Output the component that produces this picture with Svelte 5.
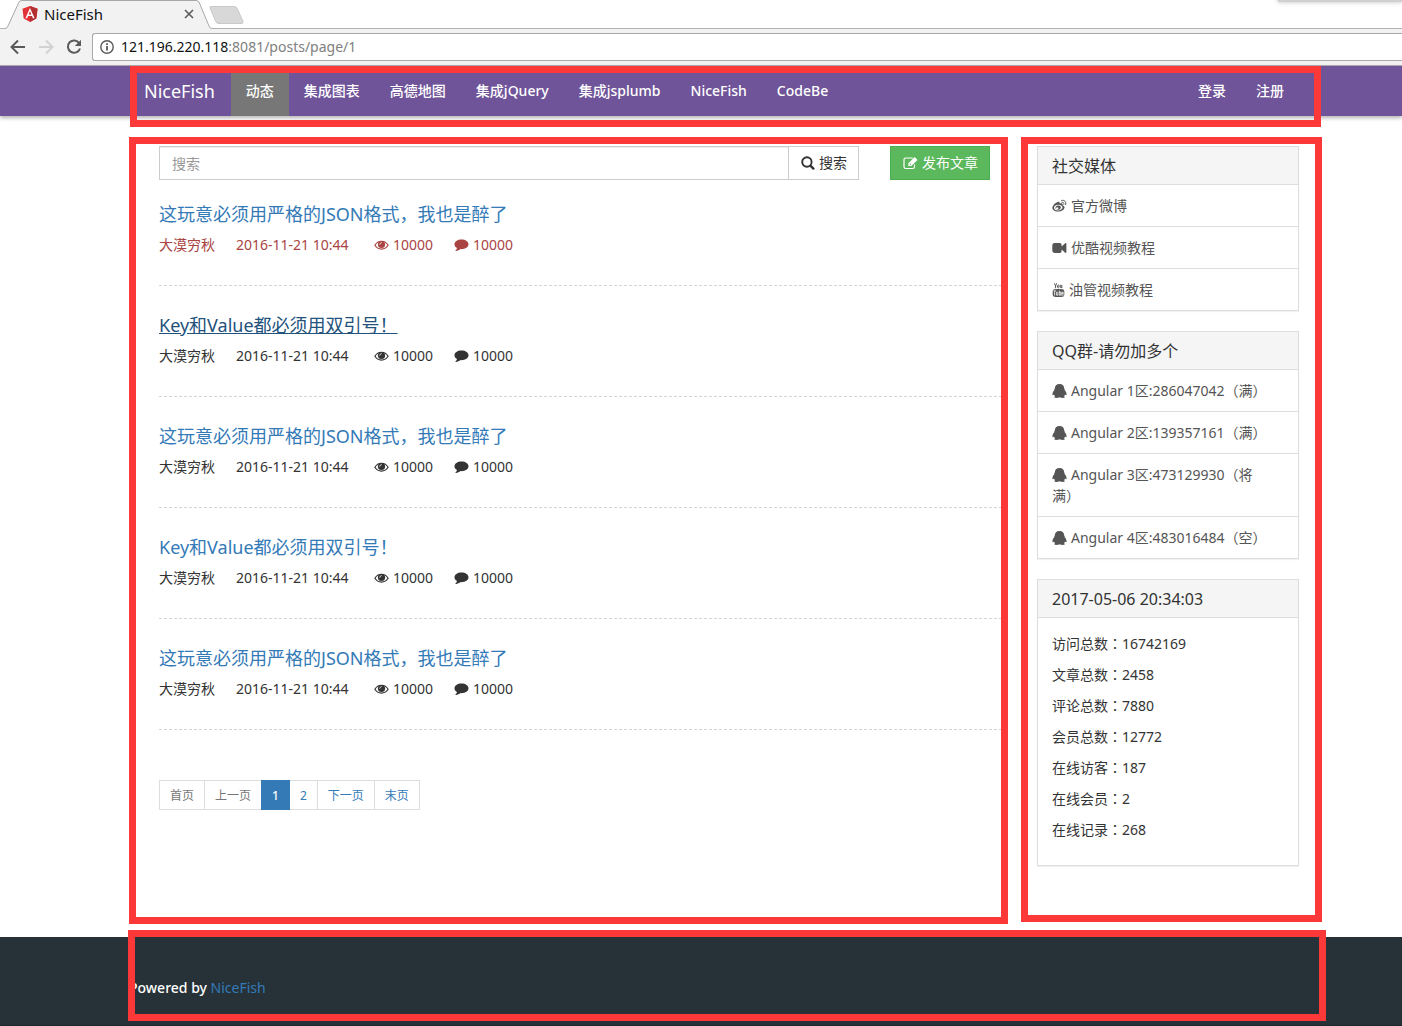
<script>
  const links = ['动态', '集成图表', '高德地图', '集成jQuery', '集成jsplumb', 'NiceFish', 'CodeBe'];
  const account = ['登录', '注册'];

  const json = '这玩意必须用严格的JSON格式，我也是醉了';
  const quotes = 'Key和Value都必须用双引号！';
  const posts = [
    { title: json, hot: true },
    { title: quotes, hovered: true },
    { title: json },
    { title: quotes },
    { title: json }
  ].map((p) => ({ author: '大漠穷秋', time: '2016-11-21 10:44', views: 10000, comments: 10000, ...p }));

  const pages = [
    { label: '首页', disabled: true },
    { label: '上一页', disabled: true },
    { label: '1', active: true },
    { label: '2' },
    { label: '下一页' },
    { label: '末页' }
  ];

  const panels = [
    {
      title: '社交媒体',
      items: [
        { icon: 'weibo', text: '官方微博' },
        { icon: 'video', text: '优酷视频教程' },
        { icon: 'youtube', text: '油管视频教程' }
      ]
    },
    {
      title: 'QQ群-请勿加多个',
      items: [
        { icon: 'qq', text: 'Angular 1区:286047042（满）' },
        { icon: 'qq', text: 'Angular 2区:139357161（满）' },
        { icon: 'qq', text: 'Angular 3区:473129930（将满）' },
        { icon: 'qq', text: 'Angular 4区:483016484（空）' }
      ]
    }
  ];

  const stats = [
    ['访问总数', 16742169],
    ['文章总数', 2458],
    ['评论总数', 7880],
    ['会员总数', 12772],
    ['在线访客', 187],
    ['在线会员', 2],
    ['在线记录', 268]
  ];
</script>

{#snippet icon(name)}
  {#if name === 'weibo'}
    <svg class="icon" width="15" height="14" viewBox="0 0 15 14" aria-hidden="true">
      <path fill="currentColor" fill-rule="evenodd" d="M5.6 3C7 2.500 8 3 7.600 4.600C9.600 3.900 11.100 4.300 10.600 6.200C13.600 7.100 12.800 9.800 10.700 11.200C7.500 13.300 1.200 12.900.400 9.400C0 7.200 3 3.900 5.600 3ZM6 5.700C3.600 5.900 1.900 7.300 2 9C2.200 10.800 4.200 11.700 6.500 11.500C9 11.200 10.700 9.800 10.500 8.100C10.300 6.500 8.400 5.500 6 5.700Z"/>
      <path fill="currentColor" fill-rule="evenodd" d="M6 6.600C8.200 6.300 9.300 7.700 8.600 9.200C8 10.600 6 11.200 4.600 10.600C3.300 10 3.200 8.500 4 7.500C4.500 7 5.200 6.700 6 6.600ZM5.100 8.500A.9.900 0 1 0 5.200 10.200A.9.900 0 1 0 5.100 8.500Z"/>
      <path fill="none" stroke="currentColor" stroke-width="1" stroke-linecap="round" d="M9.600 1.400C12.600.700 14.600 3 13.700 5.600M9.900 3.200C11.300 2.900 12.300 4 11.900 5.200"/>
    </svg>
  {:else if name === 'video'}
    <svg class="icon" width="15" height="14" viewBox="0 0 15 14" aria-hidden="true">
      <path fill="currentColor" d="M2.500 2H7.500A2 2 0 0 1 9.600 4.100V5.500L13.200 2.200C13.600 1.900 14.400 2 14.400 2.700V11.300C14.400 12 13.600 12.100 13.200 11.800L9.600 8.500V9.900A2 2 0 0 1 7.500 12H2.500A2.300 2.300 0 0 1 .300 9.800V4.200A2.300 2.300 0 0 1 2.500 2Z"/>
    </svg>
  {:else if name === 'youtube'}
    <svg class="icon" width="13" height="14" viewBox="0 0 13 14" aria-hidden="true">
      <path fill="none" stroke="currentColor" stroke-width="1" d="M2.400.300L3.600 2.800L4.700.300M3.600 2.600V5.200M5.500 2.600Q6.300 1.200 7 2.600V4.200Q6.300 5.500 5.500 4.200ZM8.300 1.800V4.300Q8.700 5.100 9.800 4.300M9.800 1.800V5.200"/>
      <path fill="currentColor" fill-rule="evenodd" d="M2.300 6.200Q6.500 5.800 10.700 6.200Q12 6.400 12.200 7.700Q12.500 10 12.200 12.300Q12 13.600 10.700 13.700Q6.500 14.100 2.300 13.700Q1 13.600.800 12.300Q.500 10 .800 7.700Q1 6.400 2.300 6.200ZM1.500 7.500V8.300H2.300V12.500H3.100V8.300H3.900V7.500ZM4.300 8.800V12.500H6.200V8.800H5.500V11.800H5V8.800ZM6.900 7.500V12.500H8.800V8.800H7.600V7.500ZM7.600 9.500H8.100V11.800H7.600ZM9.400 8.800V12.500H11.500V11.200H10.800V11.800H10.100V10.900H11.500V8.800ZM10.100 9.500H10.800V10.200H10.100Z"/>
    </svg>
  {:else if name === 'qq'}
    <svg class="icon" width="15" height="14" viewBox="0 0 15 14" aria-hidden="true">
      <path fill="currentColor" d="M7.500.100C10.600.100 12.200 2.200 12.200 4.600C12.600 5 12.800 5.700 12.700 6.300C13.900 7.500 14.900 9.500 14.500 10.900C14.200 11.700 13.500 11 13 10.400C12.800 11.100 12.500 11.700 12 12.200C12.700 12.500 13 13 12.700 13.500C12 14.100 9 14 7.700 13.300C6.500 14 3.100 14.100 2.400 13.500C2.100 13 2.400 12.500 3.100 12.200C2.600 11.700 2.200 11.100 2 10.400C1.500 11 .800 11.700.500 10.900C.100 9.500 1.200 7.500 2.300 6.300C2.200 5.700 2.400 5 2.800 4.600C2.800 2.200 4.400.100 7.500.100Z"/>
    </svg>
  {:else if name === 'eye'}
    <svg class="icon" width="15" height="12" viewBox="0 0 15 12" aria-hidden="true">
      <path fill="none" stroke="currentColor" stroke-width="1.200" d="M.900 6.200C4 .900 11 .900 14.100 6.200C11 11.300 4 11.300.900 6.200Z"/>
      <circle cx="7.500" cy="5.500" r="3.600" fill="currentColor"/>
      <path fill="none" stroke="#fff" stroke-width=".8" stroke-linecap="round" d="M5.700 5.300Q5.800 3.800 7.300 3.600"/>
    </svg>
  {:else if name === 'comment'}
    <svg class="icon" width="15" height="12" viewBox="0 0 15 12" aria-hidden="true">
      <path fill="currentColor" d="M7.500.500C11.500.500 14.500 2.600 14.500 5.300C14.500 8.400 11 10.400 6.600 10.100C5.200 11.200 3.300 12 1.700 11.900C1.300 11.800 1.300 11.500 1.600 11.300C2.400 10.700 2.900 10 3 9.100C1.400 8.200.500 6.900.500 5.300C.500 2.600 3.500.500 7.500.500Z"/>
    </svg>
  {:else if name === 'search'}
    <svg class="icon" width="14" height="14" viewBox="0 0 14 14" aria-hidden="true">
      <circle cx="5.900" cy="6" r="4.700" fill="none" stroke="currentColor" stroke-width="1.900"/>
      <path stroke="currentColor" stroke-width="2.400" stroke-linecap="round" d="M9.600 9.800L12.400 12.600"/>
    </svg>
  {:else if name === 'edit'}
    <svg class="icon" width="15" height="14" viewBox="0 0 15 14" aria-hidden="true">
      <path fill="none" stroke="currentColor" stroke-width="1.200" d="M9.800 2H2.800Q1 2 1 3.800V10.700Q1 12.500 2.800 12.500H9.700Q11.500 12.500 11.500 10.700V8.600"/>
      <path fill="currentColor" fill-rule="evenodd" d="M11.700 1.100L14.500 3.900L8.300 10.100H5.300V7.300ZM6.400 8L7.500 9.100L8.200 8.400L7.100 7.300Z"/>
    </svg>
  {/if}
{/snippet}

<div class="page">
  <header class="browser">
    <div class="tabs">
      <div class="tab">
        <svg class="tab-shape" viewBox="0 0 207 29" aria-hidden="true">
          <path d="M0 28.500Q2 28.500 3 26L14 2Q15 .500 17 .500H191Q193 .500 194 2L204 26Q205 28.500 207 28.500V29H0Z" fill="#f2f2f2"/>
          <path d="M0 28.500Q2 28.500 3 26L14 2Q15 .500 17 .500H191Q193 .500 194 2L204 26Q205 28.500 207 28.500" fill="none" stroke="#a8a8a8"/>
        </svg>
        <svg class="favicon" width="16" height="16" viewBox="0 0 16 16" aria-hidden="true">
          <path d="M8 0L15.500 2.700L14.300 12.500L8 16L1.700 12.500L.500 2.700Z" fill="#e23237"/>
          <path d="M8 0L15.500 2.700L14.300 12.500L8 16Z" fill="#b52e31"/>
          <path d="M8 2L12.600 12.300H10.900L10 10H6L5.100 12.300H3.400ZM8 5.200L6.600 8.600H9.400Z" fill="#fff" fill-rule="evenodd"/>
        </svg>
        <span class="tab-title">NiceFish</span>
        <button class="plain" aria-label="Close tab">
          <svg width="10" height="10" viewBox="0 0 10 10"><path d="M1 1L9 9M9 1L1 9" stroke="#5a5a5a" stroke-width="1.600"/></svg>
        </button>
      </div>
      <button class="plain new-tab" aria-label="New tab">
        <svg width="36" height="18" viewBox="0 0 36 18"><path d="M2 .500H25Q27 .500 28 2L34 15.500Q34.500 17 33 17.500H10Q8 17.500 7 16L1 2Q.500 .500 2 .500Z" fill="#d8d8d8" stroke="#c8c8c8"/></svg>
      </button>
      <span class="window-shade"></span>
    </div>
    <div class="toolbar">
      <button class="plain" aria-label="Back">
        <svg width="16" height="16" viewBox="0 0 16 16"><path d="M15 8H2M8 1.500L1.500 8L8 14.500" fill="none" stroke="#5a5a5a" stroke-width="2"/></svg>
      </button>
      <button class="plain" aria-label="Forward">
        <svg width="16" height="16" viewBox="0 0 16 16"><path d="M1 8H14M8 1.500L14.500 8L8 14.500" fill="none" stroke="#d2d2d2" stroke-width="2"/></svg>
      </button>
      <button class="plain" aria-label="Reload">
        <svg width="16" height="16" viewBox="0 0 16 16"><path d="M13.300 4.200A6.200 6.200 0 1 0 14 9.500" fill="none" stroke="#5a5a5a" stroke-width="2"/><path d="M15 .800V7H8.800Z" fill="#5a5a5a"/></svg>
      </button>
      <div class="address">
        <svg width="14" height="14" viewBox="0 0 14 14" aria-hidden="true"><circle cx="7" cy="7" r="6.200" fill="none" stroke="#5a5a5a" stroke-width="1.400"/><path d="M7 6V10.500M7 3.300V5" stroke="#5a5a5a" stroke-width="1.800"/></svg>
        <span>121.196.220.118<span class="path">:8081/posts/page/1</span></span>
      </div>
    </div>
  </header>

  <nav class="navbar">
    <div class="container">
      <a class="brand" href="#home">NiceFish</a>
      {#each links as link, i}
        <a class="nav-link" class:active={i === 0} href="#{link}">{link}</a>
      {/each}
      <span class="spacer"></span>
      {#each account as link}
        <a class="nav-link" href="#{link}">{link}</a>
      {/each}
      <span class="frame frame-nav"></span>
    </div>
  </nav>

  <div class="content">
    <main>
      <form class="search-row" onsubmit={(e) => e.preventDefault()}>
        <div class="search-group">
          <input type="text" placeholder="搜索" aria-label="搜索" />
          <button class="search-button">{@render icon('search')}搜索</button>
        </div>
        <button class="publish" type="button">{@render icon('edit')}发布文章</button>
      </form>

      {#each posts as post}
        <article class:hot={post.hot}>
          <h2><a class:hovered={post.hovered} href="#post">{post.title}</a></h2>
          <div class="meta">
            <span>{post.author}</span>
            <time>{post.time}</time>
            <span class="count">{@render icon('eye')}{post.views}</span>
            <span class="count">{@render icon('comment')}{post.comments}</span>
          </div>
        </article>
      {/each}

      <ul class="pagination">
        {#each pages as page}
          <li><a class:active={page.active} class:disabled={page.disabled} href="#{page.label}">{page.label}</a></li>
        {/each}
      </ul>
      <span class="frame frame-main"></span>
    </main>

    <aside>
      {#each panels as panel}
        <section class="panel">
          <h3>{panel.title}</h3>
          {#each panel.items as item}
            <a class="item" href="#{item.text}">{@render icon(item.icon)}{item.text}</a>
          {/each}
        </section>
      {/each}
      <section class="panel">
        <h3>2017-05-06 20:34:03</h3>
        <div class="stats">
          {#each stats as [label, value]}
            <p>{label}<span class="colon">：</span>{value}</p>
          {/each}
        </div>
      </section>
      <span class="frame frame-side"></span>
    </aside>
  </div>

  <footer>
    <div class="footer-inner">
      <p>Powered by <a href="#nicefish">NiceFish</a></p>
      <span class="frame frame-footer"></span>
    </div>
  </footer>
</div>

<style>
  :global(body) {
    background: #fff;
  }

  .page {
    display: flex;
    flex-direction: column;
    min-height: 100vh;
    overflow: hidden;
    color: #333;
    font: 14px/20px 'Noto Sans', 'Noto Sans CJK SC', sans-serif;
    text-spacing-trim: space-all;
  }

  .page * {
    box-sizing: border-box;
  }

  a {
    color: #337ab7;
    text-decoration: none;
  }

  h2,
  h3,
  p,
  ul {
    margin: 0;
    padding: 0;
    font-weight: 400;
  }

  button,
  input {
    font: inherit;
  }

  .plain {
    display: flex;
    padding: 0;
    border: 0;
    background: none;
  }

  .icon {
    display: inline-block;
    flex: none;
    margin-right: 4px;
    vertical-align: -2px;
  }

  /* Browser window */
  .tabs {
    position: relative;
    display: flex;
    align-items: center;
    height: 29px;
    border-bottom: 1px solid #b4b4b4;
  }

  .tab {
    position: relative;
    display: flex;
    align-items: center;
    width: 207px;
    height: 29px;
    margin-left: 5px;
    padding: 0 18px 0 17px;
  }

  .tab-shape {
    position: absolute;
    inset: 0;
    width: 100%;
    height: 100%;
  }

  .favicon,
  .tab-title,
  .tab .plain {
    position: relative;
  }

  .tab-title {
    flex: 1;
    padding-left: 6px;
    color: #111;
    font-size: 15px;
  }

  .new-tab {
    margin: 2px 0 0 -3px;
  }

  .window-shade {
    position: absolute;
    top: -6px;
    right: 0;
    width: 124px;
    height: 8px;
    background: #d0d0d0;
    box-shadow: 0 0 5px rgba(0, 0, 0, 0.25);
  }

  .toolbar {
    display: flex;
    align-items: center;
    gap: 12px;
    height: 37px;
    padding-left: 10px;
    border-bottom: 1px solid #b0aeb2;
    background: #f2f2f2;
  }

  .address {
    display: flex;
    flex: 1;
    align-items: center;
    gap: 7px;
    height: 28px;
    margin-left: -2px;
    padding-left: 7px;
    border: 1px solid #a8a8a8;
    border-right: 0;
    border-radius: 3px 0 0 3px;
    background: #fff;
    color: #111;
  }

  .path {
    color: #808080;
  }

  /* Site navigation */
  .navbar {
    padding: 0 103px 0 129px;
    background: #6f5499;
    box-shadow: 0 2px 4px rgba(0, 0, 0, 0.3);
  }

  .container {
    position: relative;
    display: flex;
    height: 50px;
  }

  .brand,
  .nav-link {
    padding: 15px;
    color: #fff;
    white-space: nowrap;
  }

  .brand {
    padding-right: 16px;
    font-size: 18px;
  }

  .nav-link {
    font-weight: 500;
  }

  .nav-link.active {
    background: #777;
  }

  .spacer {
    flex: 1;
  }

  /* Annotation frames drawn over each region */
  .frame {
    position: absolute;
    z-index: 2;
    border: 7px solid #fc3838;
    pointer-events: none;
  }

  .frame-nav {
    inset: 0 -22px -11px 1px;
  }

  .frame-main {
    inset: -9px -1px 13px -30px;
  }

  .frame-side {
    inset: -9px -23px 15px -16px;
  }

  .frame-footer {
    inset: -7px -27px 4px -1px;
  }

  /* Posts */
  .content {
    display: grid;
    grid-template-columns: minmax(0, 1fr) 262px;
    gap: 30px;
    padding: 30px 103px 0 159px;
  }

  main,
  aside {
    position: relative;
  }

  .search-row {
    display: flex;
    gap: 31px;
    padding-right: 17px;
  }

  .search-group {
    display: flex;
    flex: 1;
  }

  .search-group input {
    flex: 1;
    min-width: 0;
    height: 34px;
    padding: 6px 12px;
    border: 1px solid #ccc;
    border-radius: 0;
    box-shadow: inset 0 1px 1px rgba(0, 0, 0, 0.075);
  }

  .search-group input::placeholder {
    color: #999;
  }

  .search-button,
  .publish {
    display: flex;
    align-items: center;
    height: 34px;
    padding: 0 11px 0 12px;
    border: 1px solid #ccc;
    background: #fff;
    color: #333;
    white-space: nowrap;
  }

  .search-button {
    margin-left: -1px;
  }

  .publish {
    border-color: #4cae4c;
    background: #5cb85c;
    color: #fff;
  }

  article {
    padding: 29px 0 30px;
    border-bottom: 1px dashed #d5d5d5;
  }

  .search-row + article {
    padding-top: 24px;
  }

  h2 {
    margin-bottom: 11px;
    font-size: 18px;
    line-height: 20px;
  }

  .hovered {
    color: #23527c;
    text-decoration: underline;
  }

  .meta {
    display: flex;
    gap: 21px;
  }

  .meta time {
    min-width: 117px;
  }

  .hot .meta {
    color: #a94442;
  }

  .count {
    display: flex;
    align-items: center;
  }

  .pagination {
    display: flex;
    margin: 50px 0 127px;
    list-style: none;
  }

  .pagination a {
    display: block;
    margin-right: -1px;
    padding: 6px 10px 4px;
    border: 1px solid #ddd;
    font-size: 12px;
    line-height: 18px;
  }

  .pagination .disabled {
    color: #777;
  }

  .pagination .active {
    position: relative;
    border-color: #337ab7;
    background: #337ab7;
    color: #fff;
    font-weight: 500;
  }

  /* Sidebar */
  .panel {
    margin-bottom: 20px;
    border: 1px solid #ddd;
    box-shadow: 0 1px 1px rgba(0, 0, 0, 0.05);
    line-height: 21px;
  }

  h3 {
    padding: 11px 14px 9px;
    background: #f5f5f5;
    font-size: 16px;
    line-height: 17px;
  }

  .item {
    display: block;
    padding: 10px 30px 10px 14px;
    border-top: 1px solid #ddd;
    color: #555;
  }

  .stats {
    padding: 15px 14px;
    border-top: 1px solid #ddd;
  }

  .stats p {
    margin-bottom: 10px;
  }

  .colon {
    font-family: 'Noto Sans CJK TC', sans-serif;
  }

  /* Footer */
  footer {
    flex: 1;
    padding: 0 103px 0 129px;
    border-bottom: 1px solid #1c2730;
    background: #263238;
    color: #fff;
  }

  .footer-inner {
    position: relative;
    height: 88px;
    padding-top: 41px;
  }

  .footer-inner p {
    font-weight: 500;
  }

  .footer-inner a {
    font-weight: 400;
  }
</style>
